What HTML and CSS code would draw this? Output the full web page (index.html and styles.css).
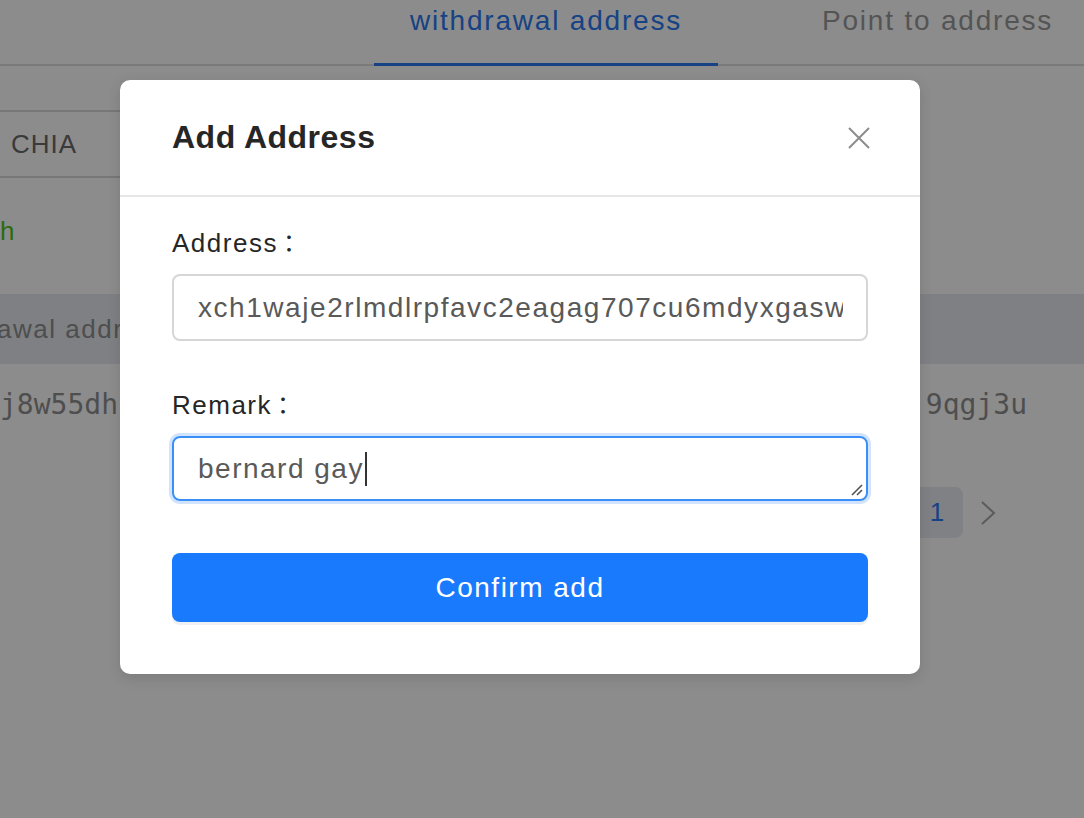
FILE: index.html
```html
<!DOCTYPE html>
<html lang="en">
<head>
<meta charset="utf-8">
<title>Add Address</title>
<link rel="stylesheet" href="styles.css">
</head>
<body>
<div class="page">
  <div class="tabs">
    <div class="tab tab-active">withdrawal address</div>
    <div class="tab tab-second">Point to address</div>
  </div>
  <div class="select">CHIA</div>
  <div class="hint">h</div>
  <div class="thead"><span class="thead-text">Withdrawal address</span></div>
  <div class="trow"><span class="addr-start">j8w55dh</span><span class="addr-end">9qgj3u</span></div>
  <div class="pager">
    <span class="page-num">1</span>
    <svg class="next" width="18" height="26" viewBox="0 0 18 26"><path d="M3 2 L15 13 L3 24" fill="none" stroke="#a6a6a6" stroke-width="2"/></svg>
  </div>
</div>
<div class="mask"></div>
<div class="modal">
  <div class="modal-header">
    <div class="modal-title">Add Address</div>
    <svg class="close" width="24" height="24" viewBox="0 0 24 24"><path d="M2 2 L22 22 M22 2 L2 22" stroke="#8c8c8c" stroke-width="2" fill="none"/></svg>
  </div>
  <div class="modal-body">
    <div class="label">Address<span class="colon">：</span></div>
    <div class="input"><div class="input-inner">xch1waje2rlmdlrpfavc2eagag707cu6mdyxgasw5m8r4zq0xj8w55dh</div></div>
    <div class="label label-second">Remark<span class="colon">：</span></div>
    <div class="textarea">
      <span class="textarea-text">bernard gay</span><span class="caret"></span>
      <svg class="grip" width="14" height="14" viewBox="0 0 14 14"><path d="M13 3 L3 13 M13 8 L8 13" stroke="#555" stroke-width="1.6" fill="none"/></svg>
    </div>
    <button class="confirm">Confirm add</button>
  </div>
</div>
</body>
</html>
```

FILE: styles.css
```css
html, body {
  margin: 0;
  padding: 0;
}
body {
  width: 1084px;
  height: 818px;
  overflow: hidden;
  background: #ffffff;
  font-family: "Liberation Sans", Arial, "Noto Sans CJK SC", sans-serif;
  position: relative;
}
.page {
  display: flex;
  flex-direction: column;
}
.tabs {
  display: flex;
  height: 64px;
  padding-left: 374px;
  border-bottom: 2px solid #dedede;
  font-size: 28px;
  letter-spacing: 1.8px;
}
.tab {
  box-sizing: border-box;
  height: 66px;
  margin-bottom: -2px;
  line-height: 42px;
  color: #9a9a9a;
}
.tab-active {
  width: 344px;
  text-align: center;
  color: #2a78f0;
  border-bottom: 3px solid #2a78f0;
}
.tab-second {
  padding-left: 104px;
}
.select {
  box-sizing: border-box;
  margin-top: 44px;
  margin-left: -20px;
  width: 420px;
  height: 68px;
  border-top: 2px solid #d9d9d9;
  border-bottom: 2px solid #d9d9d9;
  padding-left: 31px;
  line-height: 64px;
  font-size: 26px;
  letter-spacing: 1px;
  color: #6a6a6a;
}
.hint {
  margin-top: 35px;
  line-height: 36px;
  font-size: 26px;
  color: #52c41a;
}
.thead {
  margin-top: 45px;
  height: 70px;
  background: #e6e9f0;
  overflow: hidden;
  white-space: nowrap;
  line-height: 70px;
  font-size: 26px;
  letter-spacing: 1.5px;
  color: #8f8f8f;
}
.thead-text {
  display: inline-block;
  margin-left: -87px;
}
.trow {
  display: flex;
  justify-content: space-between;
  height: 82px;
  line-height: 82px;
  padding-right: 57px;
  font-family: "DejaVu Sans Mono", monospace;
  font-size: 28px;
  color: #8f8f8f;
}
.pager {
  display: flex;
  justify-content: flex-end;
  align-items: center;
  gap: 16px;
  margin-top: 41px;
  padding-right: 87px;
}
.page-num {
  width: 52px;
  height: 51px;
  border-radius: 8px;
  background: #e8ebf2;
  color: #2a78f0;
  font-size: 26px;
  line-height: 51px;
  text-align: center;
}
.mask {
  position: absolute;
  inset: 0;
  background: rgba(0, 0, 0, 0.45);
}
.modal {
  position: absolute;
  left: 120px;
  top: 80px;
  width: 800px;
  background: #ffffff;
  border-radius: 10px;
  box-shadow: 0 4px 14px rgba(0, 0, 0, 0.12);
}
.modal-header {
  display: flex;
  align-items: center;
  justify-content: space-between;
  height: 115px;
  padding: 0 49px 0 52px;
  border-bottom: 2px solid #e6e6e6;
}
.modal-title {
  font-size: 32px;
  font-weight: 700;
  letter-spacing: 0.5px;
  color: #262626;
}
.close {
  display: block;
}
.modal-body {
  display: flex;
  flex-direction: column;
  padding: 28px 52px 52px;
}
.label {
  height: 36px;
  line-height: 36px;
  font-size: 26px;
  letter-spacing: 1.5px;
  color: #262626;
  margin-bottom: 13px;
}
.colon {
  display: inline-block;
  height: 36px;
  line-height: 32px;
  vertical-align: top;
  margin-left: 5px;
  font-family: "Noto Sans CJK SC", sans-serif;
  font-size: 24px;
  letter-spacing: 0;
}
.label-second {
  margin-top: 46px;
}
.input {
  box-sizing: border-box;
  height: 67px;
  border: 2px solid #d6d6d6;
  border-radius: 8px;
  padding: 0 23px 0 24px;
}
.input-inner {
  overflow: hidden;
  white-space: nowrap;
  line-height: 63px;
  font-size: 28px;
  letter-spacing: 1.55px;
  color: #595959;
}
.textarea {
  position: relative;
  box-sizing: border-box;
  height: 65px;
  border: 2px solid #3a8ef7;
  border-radius: 8px;
  box-shadow: 0 0 0 3px #d2e4fd;
  padding: 0 24px;
  display: flex;
  align-items: center;
  font-size: 28px;
  letter-spacing: 1.5px;
  color: #595959;
}
.textarea-text {
  line-height: 61px;
}
.caret {
  display: inline-block;
  width: 2px;
  height: 34px;
  background: #333333;
  margin-left: 1px;
}
.grip {
  position: absolute;
  right: 3px;
  bottom: 3px;
}
.confirm {
  margin-top: 52px;
  height: 69px;
  border: none;
  border-radius: 8px;
  background: #1a7afe;
  color: #ffffff;
  font-family: "Liberation Sans", Arial, sans-serif;
  font-size: 28px;
  letter-spacing: 1.5px;
  box-shadow: 0 3px 0 #eef0f3;
  padding: 0;
}
```
